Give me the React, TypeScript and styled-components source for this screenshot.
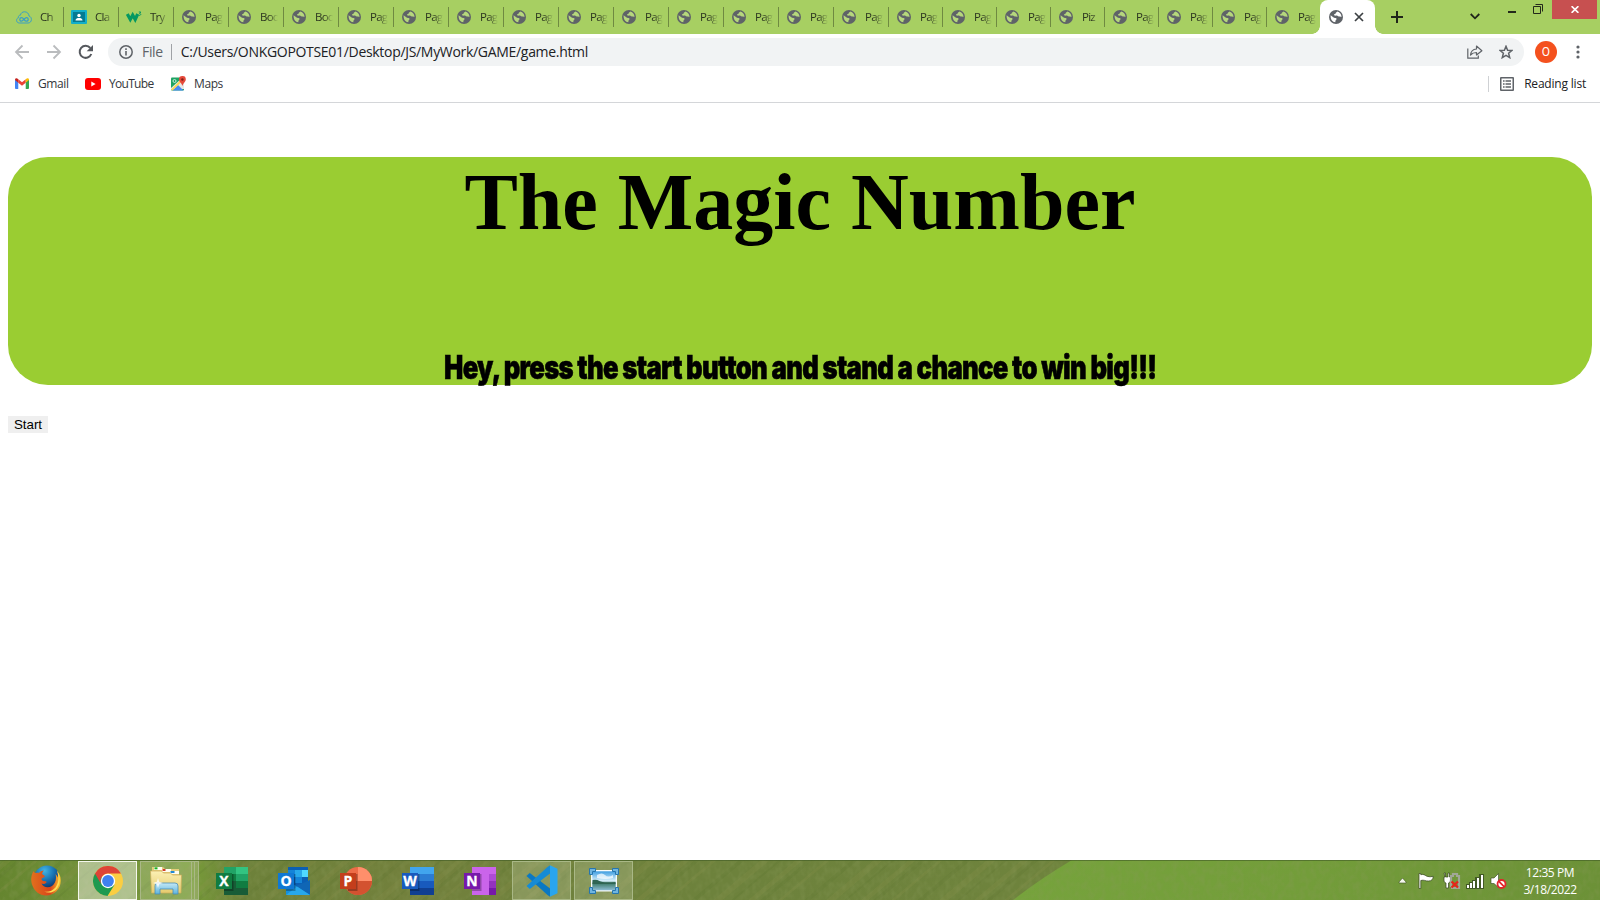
import React from "react";
import styled, { createGlobalStyle } from "styled-components";

const GlobalStyle = createGlobalStyle`
  *, *::before, *::after { box-sizing: border-box; }
  html, body { margin: 0; padding: 0; background: #fff; overflow: hidden; }
  svg { display: block; flex: none; }
`;

const UI_FONT = `"Open Sans", "Noto Sans", sans-serif`;

const Screen = styled.div`
  width: 1600px;
  height: 900px;
  display: flex;
  flex-direction: column;
  overflow: hidden;
  font-family: ${UI_FONT};
  font-size: 12px;
  color: #202124;
`;

/* ---------- tab strip ---------- */
const TabStrip = styled.div`
  height: 34px;
  flex: none;
  display: flex;
  align-items: flex-start;
  padding-left: 9px;
  background: #a7cf62;
`;

const Tab = styled.div<{ $w: number; $line: boolean }>`
  width: ${(p) => p.$w}px;
  height: 20px;
  margin-top: 7px;
  padding-left: 7px;
  flex: none;
  display: flex;
  align-items: center;
  border-right: ${(p) => (p.$line ? "1px solid #6f8a41" : "none")};
`;

const TabIcon = styled.span`
  width: 16px;
  height: 16px;
  display: flex;
  align-items: center;
  justify-content: center;
`;

const TabTitle = styled.span`
  width: 18px;
  margin-left: 8px;
  white-space: nowrap;
  font-size: 11.5px;
  line-height: 18px;
  letter-spacing: -0.75px;
  color: #2c3620;
  mask-image: linear-gradient(90deg, #000 50%, transparent 100%);
`;

const ActiveTab = styled.div`
  position: relative;
  width: 55px;
  height: 34px;
  flex: none;
  display: flex;
  align-items: center;
  padding-left: 9px;
  gap: 11px;
  background: #fff;
  border-radius: 8px 8px 0 0;
  &::before, &::after {
    content: "";
    position: absolute;
    bottom: 0;
    width: 8px;
    height: 8px;
  }
  &::before { left: -8px; background: radial-gradient(circle at 0 0, transparent 7.5px, #fff 8px); }
  &::after { right: -8px; background: radial-gradient(circle at 100% 0, transparent 7.5px, #fff 8px); }
`;

const NewTab = styled.div` margin: 11px 0 0 16px; `;
const TabSearch = styled.div` margin: 13px 0 0 auto; `;

const WindowButtons = styled.div`
  display: flex;
  align-items: flex-start;
  margin-left: 28px;
  padding-right: 3px;
`;
const Minimize = styled.i`
  width: 8px;
  height: 2px;
  margin-top: 11px;
  background: #23291b;
`;
const Restore = styled.div` margin: 4px 9px 0 17px; `;
const CloseButton = styled.div`
  width: 45px;
  height: 19px;
  display: flex;
  align-items: center;
  justify-content: center;
  background: #c75050;
`;

/* ---------- toolbar ---------- */
const Toolbar = styled.div`
  height: 36px;
  flex: none;
  display: flex;
  align-items: center;
  padding: 0 17px 0 14px;
`;
const NavButtons = styled.div`
  width: 94px;
  display: flex;
  gap: 16px;
`;
const Omnibox = styled.div`
  width: 1416px;
  height: 28px;
  display: flex;
  align-items: center;
  padding: 0 11px;
  border-radius: 14px;
  background: #f1f3f4;
  font-size: 14px;
`;
const Scheme = styled.span`
  margin: 0 8px 1px 9px;
  letter-spacing: -0.35px;
  color: #5f6368;
`;
const Divider = styled.i<{ $h: number; $c: string }>`
  width: 1px;
  height: ${(p) => p.$h}px;
  background: ${(p) => p.$c};
`;
const Address = styled.span`
  margin: 0 auto 1px 9px;
  white-space: nowrap;
  letter-spacing: -0.31px;
`;
const OmniActions = styled.div`
  display: flex;
  align-items: center;
  gap: 16px;
`;
const Avatar = styled.div`
  width: 22px;
  height: 22px;
  margin: 0 19px 0 11px;
  display: flex;
  align-items: center;
  justify-content: center;
  border-radius: 50%;
  background: #f4511e;
  color: #fff;
  font: 12px Roboto, sans-serif;
`;

/* ---------- bookmarks ---------- */
const BookmarkBar = styled.div`
  height: 33px;
  flex: none;
  display: flex;
  align-items: center;
  padding: 0 14px 5px 15px;
  border-bottom: 1px solid #d4d6d9;
`;
const Bookmark = styled.div<{ $w: number; $gap: number; $ls: number }>`
  width: ${(p) => p.$w}px;
  display: flex;
  align-items: center;
  gap: ${(p) => p.$gap}px;
  white-space: nowrap;
  letter-spacing: ${(p) => p.$ls}px;
  color: #34373b;
`;
const ReadingList = styled.div`
  margin-left: auto;
  display: flex;
  align-items: center;
  gap: 10px;
  white-space: nowrap;
  letter-spacing: -0.2px;
  & > :nth-child(2) { margin-left: 1px; }
`;

/* ---------- page ---------- */
const Page = styled.main`
  flex: 1;
  padding: 54px 8px 0;
  background: #fff;
`;
const Banner = styled.section`
  height: 228px;
  display: flex;
  flex-direction: column;
  align-items: center;
  justify-content: space-between;
  border-radius: 40px;
  background: #9acd32;
  color: #000;
`;
const Title = styled.h1`
  margin: 0;
  font: bold 80px/91px "Liberation Serif", serif;
  white-space: nowrap;
`;
const Tagline = styled.h2`
  margin: 0;
  font: 900 33px/36px Inter, sans-serif;
  letter-spacing: -0.9px;
  white-space: nowrap;
  transform: scaleX(0.779);
  -webkit-text-stroke: 0.6px #000;
`;
const StartButton = styled.button`
  width: 40px;
  height: 17px;
  margin-top: 31px;
  padding: 0;
  border: 0;
  background: #efefef;
  color: #000;
  font: 13.33px/17px "Liberation Sans", sans-serif;
  display: block;
`;

/* ---------- taskbar ---------- */
const Taskbar = styled.footer`
  position: relative;
  height: 40px;
  flex: none;
  display: flex;
  padding-left: 16px;
  background: #6f823c;
`;
const Wallpaper = styled.svg`
  position: absolute;
  inset: 0;
`;
const Slot = styled.div<{ $state?: "active" | "open" }>`
  position: relative;
  width: 59px;
  height: 39px;
  margin: 1px 3px 0 0;
  display: flex;
  align-items: center;
  justify-content: center;
  border: ${(p) => (p.$state === "active" ? "1px solid #f4f7ec" : p.$state ? "1px solid #a9b886" : "none")};
  background: ${(p) => (p.$state === "active" ? "rgba(255,255,255,.42)" : p.$state ? "rgba(235,240,215,.2)" : "none")};
`;
const Stack = styled(Slot)`
  padding-right: 8px;
  &::before, &::after {
    content: "";
    position: absolute;
    top: -1px;
    bottom: -1px;
    width: 4px;
    border: 1px solid #a9b886;
    border-width: 1px 1px 1px 0;
  }
  &::before { right: 3px; border-left-width: 1px; }
  &::after { right: -1px; }
`;
const Tray = styled.div`
  position: relative;
  margin-left: auto;
  display: flex;
  align-items: center;
  padding-top: 2px;
`;
const Clock = styled.div`
  width: 100px;
  margin-left: -8px;
  display: flex;
  flex-direction: column;
  align-items: center;
  color: #fff;
  font-size: 12px;
  line-height: 17px;
  letter-spacing: -0.4px;
  padding-bottom: 1px;
`;

/* ---------- icons ---------- */
const Globe = ({ land = "#b5d77c" }: { land?: string }) => (
  <svg width="14" height="14" viewBox="0 0 14 14">
    <circle cx="7" cy="7" r="7" fill="#5f6368" />
    <path d="M1.600 5.200 4.600 7.400c.8.6 1.800.2 2.600.8.8.7.2 1.600-.4 2-.5.4-.3 1.200-.5 2.100C3.500 11.900 1.300 9.400 1.600 5.200Z M8.300 1.600c-.4.9-1.500.8-1.600 1.700-.1.900-1.500.6-1.700 1.500-.1.800 1.200.9 2.200.8 1.200-.1 1.700.7 2.600 1 .9.300 1.500.1 2.700.4C12.500 4.500 10.900 2.300 8.300 1.600Z" fill={land} />
  </svg>
);

const CloudIcon = () => (
  <svg width="16" height="13" viewBox="0 0 16 13" fill="none" stroke="#3a9fc5" strokeWidth="1">
    <path d="M3.500 12C1.500 12 .6 10.800.6 9.300.6 8 1.300 7 2.500 6.700 2 4.800 3.500 4 4.400 4.200 4.800 2 6.500.8 8.500.8c2.500 0 4.400 1.700 4.500 4.200 1.500.4 2.400 1.700 2.400 3.500 0 2.100-1.400 3.500-3.400 3.500Z" />
    <path d="M8 8.300C7 7 6.400 6.600 5.600 6.600a1.800 1.800 0 0 0 0 3.600C6.700 10.200 9 6.600 10.400 6.600a1.800 1.800 0 0 1 0 3.600C9.600 10.200 8.800 9.500 8 8.300Z" strokeWidth="1.300" />
  </svg>
);

const ClassroomIcon = () => (
  <svg width="16" height="14" viewBox="0 0 16 14">
    <rect width="16" height="14" rx="1" fill="#12aeca" />
    <rect x="2" y="2" width="12" height="10" fill="#057a91" />
    <circle cx="8" cy="5.500" r="1.700" fill="#fff" />
    <path d="M4.500 10.500C4.500 8.600 6.400 8 8 8s3.500.6 3.500 2.500Z" fill="#fff" />
  </svg>
);

const W3Icon = () => (
  <svg width="16" height="12" viewBox="0 0 16 12" fill="none" stroke="#059862">
    <path d="M1.300 3 4.300 8.500 6.700 4 9.200 8.500 11.700 3" strokeWidth="3.200" />
    <path d="M12.800 1h2l-1.200 1.600c1.700 0 1.500 2.200-.9 1.700" strokeWidth="1" />
  </svg>
);

const Arrow = ({ flip }: { flip?: boolean }) => (
  <svg width="16" height="16" viewBox="0 0 16 16" fill="none" stroke="#babcbe" strokeWidth="1.800" transform={flip ? "scale(-1 1)" : undefined}>
    <path d="M15 8H2.300M8.500 1.500 2 8l6.500 6.500" />
  </svg>
);

const Reload = () => (
  <svg width="16" height="16" viewBox="0 0 16 16">
    <path d="M13.300 10A6 6 0 1 1 12.300 4" fill="none" stroke="#55585d" strokeWidth="2" />
    <path d="M15 1v6.300H8.700Z" fill="#55585d" />
  </svg>
);

const Info = () => (
  <svg width="14" height="14" viewBox="0 0 14 14">
    <circle cx="7" cy="7" r="6.200" fill="none" stroke="#5f6368" strokeWidth="1.500" />
    <path d="M6.200 6h1.600v4.500H6.200ZM6.200 3.300h1.600v1.600H6.200Z" fill="#5f6368" />
  </svg>
);

const Share = () => (
  <svg width="16" height="14" viewBox="0 0 16 14" fill="none" stroke="#5f6368" strokeWidth="1.200">
    <path d="M.8 3.500v9.700h10.500V10.500" />
    <path d="M3.500 10C3.800 6.300 6 4.300 9.500 4V1l5.400 4.700L9.500 10V7.500C7 7.500 5 8.300 3.500 10Z" strokeLinejoin="round" />
  </svg>
);

const Star = () => (
  <svg width="14" height="14" viewBox="0 0 14 14">
    <path d="m7 1.300 1.600 3.900 4.300.3-3.300 2.800 1.100 4.300L7 10.300l-3.700 2.300 1.100-4.300L1.100 5.500l4.300-.3Z" fill="none" stroke="#5f6368" strokeWidth="1.500" />
  </svg>
);

const Dots = () => (
  <svg width="4" height="14" viewBox="0 0 4 14" fill="#5f6368">
    <circle cx="2" cy="2" r="1.600" /><circle cx="2" cy="7" r="1.600" /><circle cx="2" cy="12" r="1.600" />
  </svg>
);

const Gmail = () => (
  <svg width="14" height="11" viewBox="0 0 15 11" preserveAspectRatio="none">
    <path d="M0 1.500V10a1 1 0 0 0 1 1h2.500V4Z" fill="#4285f4" />
    <path d="M15 1.500V10a1 1 0 0 1-1 1h-2.500V4Z" fill="#34a853" />
    <path d="M3.500 1.200 7.500 4.300l4-3.100v3.500l-4 3.100-4-3.100Z" fill="#ea4335" />
    <path d="M0 2C0 .2 1.700-.4 3.500 1.200v3.500L0 2.100Z" fill="#c5221f" />
    <path d="M15 2c0-1.800-1.700-2.400-3.500-.8v3.500L15 2.100Z" fill="#fbbc04" />
  </svg>
);

const YouTube = () => (
  <svg width="16" height="12" viewBox="0 0 16 12">
    <rect width="16" height="12" rx="3" fill="#f00" />
    <path d="M6.300 3.500v5L10.600 6Z" fill="#fff" />
  </svg>
);

const MapsIcon = () => (
  <svg width="15" height="15" viewBox="0 0 15 15">
    <rect y="1.500" width="13" height="13" rx="1" fill="#1fa463" />
    <path d="M0 13.500V12L11 2l2 2v9Z" fill="#e8e8e6" />
    <path d="M1.500 14.500 7 9l5.500 5.500Z" fill="#4a8af4" />
    <path d="M0 13.800 9 4.500l1.500 1.500L1.500 14.500Z" fill="#fdd652" />
    <circle cx="3.500" cy="5" r="1.500" fill="none" stroke="#d9f2e3" strokeWidth=".9" />
    <path d="M11.300 0a3.400 3.400 0 0 1 3.500 3.500c0 2.500-2.600 3.300-3.300 6.500-.8-3.200-3.500-4-3.500-6.500A3.400 3.400 0 0 1 11.300 0Z" fill="#e5493a" />
    <circle cx="11.400" cy="3.500" r="1.200" fill="#802018" />
  </svg>
);

const ListIcon = () => (
  <svg width="14" height="14" viewBox="0 0 14 14" fill="#5f6368">
    <path fillRule="evenodd" d="M1 0h12a1 1 0 0 1 1 1v12a1 1 0 0 1-1 1H1a1 1 0 0 1-1-1V1a1 1 0 0 1 1-1Zm.500 1.500v11h11v-11Z" />
    <path d="M3 3.300h1.600v1.500H3ZM5.500 3.300H11v1.500H5.500ZM3 6.300h1.600v1.500H3ZM5.500 6.300H11v1.500H5.500ZM3 9.300h1.600v1.500H3ZM5.500 9.300H11v1.500H5.500Z" />
  </svg>
);

const Firefox = () => (
  <svg width="30" height="31" viewBox="0 0 30 31">
    <defs>
      <radialGradient id="ffBlue" cx=".4" cy=".2" r=".8"><stop offset="0" stopColor="#42b5e6" /><stop offset=".5" stopColor="#166dae" /><stop offset="1" stopColor="#0b1f52" /></radialGradient>
      <linearGradient id="ffFire" x1="0" x2="1"><stop offset="0" stopColor="#e2701d" /><stop offset=".65" stopColor="#d9451b" /><stop offset="1" stopColor="#fbc72f" /></linearGradient>
    </defs>
    <circle cx="16" cy="13.500" r="13" fill="url(#ffBlue)" />
    <path d="M2.500 6C.2 10-.5 15 1 19.500 3 26 8.500 30.500 15 30.500c8.500 0 14.500-6.500 14.700-14.500.1-4.500-1.200-7.500-3.700-10.500 1 3 1 5 .8 7-.6-1.500-1.300-2.500-2.300-3.500 1.500 5-.5 10-3.500 12-4 2.300-9 1.300-10.500-2.500 1.700.8 3.200.4 4.500-.6 1-.8.500-1.600-.5-1.700-2.400-.2-3.800-.5-4-2.200 0-1 2.700-1.500 3.300-2.500.3-.7-1.500-1.500-2.700-2.500.1-1.500.7-2.600 1.900-3.500-2.300.1-4 1-5 2.500-1-.3-2-.2-3 0C3.700 8 2.800 7 2.500 6Z" fill="url(#ffFire)" />
    <path d="M26 6c2.600 6 1.700 12-1.500 16.500C21.500 26 17 27.500 13 26.500c4.500 2.300 10 1 13.200-3.300C29.700 18 29.500 10.500 26 6Z" fill="#fde054" />
  </svg>
);

const Chrome = () => (
  <svg width="30" height="30" viewBox="0 0 30 30">
    <circle cx="15" cy="15" r="15" fill="#fbce42" />
    <path d="M15 15 2 7.500A15 15 0 0 0 14.500 30L21.500 18.700Z" fill="#1e9a50" />
    <path d="M2 7.500A15 15 0 0 1 28 7.500H15A7.500 7.500 0 0 0 8.500 18.700Z" fill="#dd4437" />
    <circle cx="15" cy="15" r="7.200" fill="#fff" />
    <circle cx="15" cy="15" r="5.900" fill="#3f81f0" />
  </svg>
);

const Explorer = () => (
  <svg width="32" height="30" viewBox="0 0 32 30">
    <defs>
      <linearGradient id="folder" x2="0" y2="1"><stop offset="0" stopColor="#fbf0b4" /><stop offset="1" stopColor="#e6cb6e" /></linearGradient>
      <linearGradient id="stand" x2="0" y2="1"><stop offset="0" stopColor="#c4e8f6" /><stop offset="1" stopColor="#5eb4dd" /></linearGradient>
    </defs>
    <path d="M2 1h11l2 2h14v8H2Z" fill="#e4cd7b" />
    <path d="M4 1h8v3H4Z M12 3h9v3h-9Z M20 5h9v3h-9Z" fill="#fffdf0" />
    <path d="M4.500 1.300h3v2h-3Z" fill="#19b322" /><path d="M12.500 3h3v2h-3Z" fill="#d03c26" /><path d="M20.500 5h4v2h-4Z" fill="#2089d4" />
    <path d="M.5 5h11l2 2h7l2 2h9L31 27H1.500Z" fill="url(#folder)" stroke="#cdae59" strokeWidth=".7" />
    <path d="M7 17h18q3 0 3 3v8h-5v-5H10v5H5v-8q0-3 2-3Z" fill="url(#stand)" stroke="#498eb5" strokeWidth=".8" />
    <path d="m8 12 1.200 3.800L13 17l-3.800 1.200L8 22l-1.200-3.800L3 17l3.800-1.200Z" fill="#fff" opacity=".8" />
  </svg>
);

type OfficeProps = { letter: string; color: string; children: React.ReactNode };
const OfficeIcon = ({ letter, color, children }: OfficeProps) => (
  <svg width="32" height="28" viewBox="0 0 32 28">
    {children}
    <path d="M8 7h9.500v17H8Z" fill="#000" opacity=".28" />
    <rect y="6" width="16" height="16" fill={color} />
    <text x="8" y="19" textAnchor="middle" fill="#fff" stroke="#fff" strokeWidth=".3" fontFamily="Open Sans, sans-serif" fontWeight="700" fontSize="14">{letter}</text>
  </svg>
);

const VSCode = () => (
  <svg width="32" height="32" viewBox="0 0 32 32">
    <path d="M.5 11 3.800 8 24 23.500v8.200L21.500 30Z" fill="#0a78c3" />
    <path d="M.5 21 3.800 24 24 8.500V.3L21.500 2Z" fill="#168bd5" />
    <path d="M24 .3 31.500 3.800v24.400L24 31.700Z" fill="#29a5ee" />
  </svg>
);

const Viewer = () => (
  <svg width="30" height="26" viewBox="0 0 30 26">
    <defs><linearGradient id="sky" x2="0" y2="1"><stop offset="0" stopColor="#3d9de1" /><stop offset=".5" stopColor="#d7effa" /><stop offset=".65" stopColor="#417e6e" /><stop offset="1" stopColor="#8fbed5" /></linearGradient></defs>
    <rect x="2" y="2" width="26" height="21.500" fill="#f8fbfa" />
    <rect x="3.300" y="3.300" width="23.400" height="19" fill="url(#sky)" />
    <path d="M3.500 12q4-1 7 1t16 1v2h-23Z" fill="#2f6552" />
    <path d="M8 7q5-3 8 0t8 0v3q-7 2-16 0Z" fill="#fff" opacity=".7" />
    <g fill="#70b5df" stroke="#2575ae" strokeWidth="1">
      <path d="M.5.500h6v3h-3v3h-3ZM23.500.500h6v6h-3v-3h-3ZM.5 19.500h3v3h3v3h-6ZM26.500 19.500h3v6h-6v-3h3Z" />
    </g>
  </svg>
);

const TrayIcons = () => (
  <svg width="110" height="18" viewBox="0 0 110 18">
    <path d="m1 10 3.500-4L8 10v1H1Z" fill="#f4f7ed" stroke="#3e5420" strokeWidth=".6" />
    <path d="M21 1.500h1.800v1.200c3-1 4.200.8 6.200 1.600q3 1 6.200 0c0 3-1.500 4.700-4.700 4.700-3 .2-4.500-1.500-7.700-.5v8H21Z" fill="#fff" stroke="#33441d" strokeWidth=".7" />
    <path d="M46 1h1.500v4H50V1h1.500v4h1v3c0 2-1 2.500-2 3v5h-2.500v-5c-1.500-.5-2-1-2-3V5h1Z" fill="#fff" stroke="#33441d" strokeWidth=".7" />
    <path d="M53 15V4h2V2h4v2h2v12h-8" fill="none" stroke="#a1a797" strokeWidth="2.200" />
    <path d="m53.500 9.500 6.500 6m0-6-6.500 6" stroke="#e8231b" strokeWidth="2.300" />
    <path d="M68 12h3v-2h3V8h3V5h4V2h5v15H68Z" fill="#33441d" opacity=".75" />
    <path d="M69 13h2v3h-2ZM72 11h2v5h-2ZM75 9h2v7h-2ZM79 6h2v10h-2ZM83 3h2v13h-2Z" fill="#fff" />
    <path d="M93 6h3l4.500-4.500v14L96 11.500h-3Z" fill="#fff" stroke="#33441d" strokeWidth=".6" />
    <circle cx="103.500" cy="12" r="4" fill="#fff" stroke="#e3242b" strokeWidth="1.800" />
    <path d="m100.700 9.200 5.600 5.600" stroke="#e3242b" strokeWidth="1.800" />
  </svg>
);

const TaskbarWallpaper = () => (
  <Wallpaper width="1600" height="40" viewBox="0 0 1600 40">
    <defs>
      <linearGradient id="leaf"><stop offset="0" stopColor="#65852f" /><stop offset=".07" stopColor="#76953c" /><stop offset=".12" stopColor="#779b39" /><stop offset=".15" stopColor="#6d813a" /><stop offset=".25" stopColor="#72803c" /><stop offset=".45" stopColor="#6d823c" /><stop offset="1" stopColor="#70853d" /></linearGradient>
      <linearGradient id="bright"><stop offset="0" stopColor="#76a33c" /><stop offset=".5" stopColor="#739d3a" /><stop offset="1" stopColor="#6c9137" /></linearGradient>
      <pattern id="veins" width="113" height="40" patternUnits="userSpaceOnUse" patternTransform="skewX(-50)">
        <path d="M5 0h7v40H5ZM35 0h4v40h-4ZM83 0h9v40h-9Z" fill="#8b9149" opacity=".2" />
        <path d="M17 0h5v40h-5ZM61 0h6v40h-6ZM101 0h3v40h-3Z" fill="#4e6a2b" opacity=".15" />
      </pattern>
      <filter id="grain" x="0" y="0" width="1" height="1">
        <feTurbulence type="fractalNoise" baseFrequency=".18 .13" numOctaves="2" seed="4" />
        <feColorMatrix values="0 0 0 0 .25  0 0 0 0 .32  0 0 0 0 .1  1.300 0 0 0 -.5" />
      </filter>
    </defs>
    <rect width="1600" height="40" fill="url(#leaf)" />
    <rect width="1600" height="40" fill="url(#veins)" />
    <path d="M1072 0H1600V40H1013Q1040 19 1072 0Z" fill="url(#bright)" />
    <rect width="1600" height="40" filter="url(#grain)" opacity=".5" />
    <rect width="1600" height="1" fill="#3f5a25" opacity=".6" />
  </Wallpaper>
);

/* ---------- data ---------- */
const tabTitles = [
  "Ch", "Cla", "Try", "Pag", "Boo", "Boo", "Pag", "Pag", "Pag", "Pag", "Pag", "Pag",
  "Pag", "Pag", "Pag", "Pag", "Pag", "Pag", "Pag", "Piz", "Pag", "Pag", "Pag", "Pag",
];
const siteIcons = [<CloudIcon />, <ClassroomIcon />, <W3Icon />];

export default function App() {
  return (
    <Screen>
      <GlobalStyle />
      <TabStrip>
        {tabTitles.map((title, i) => (
          <Tab key={i} $w={i < 16 ? 55 : i < 23 ? 54 : 53} $line={i < 23}>
            <TabIcon>{siteIcons[i] ?? <Globe />}</TabIcon>
            <TabTitle>{title}</TabTitle>
          </Tab>
        ))}
        <ActiveTab>
          <Globe land="#fff" />
          <svg width="10" height="10" viewBox="0 0 10 10" stroke="#3c4043" strokeWidth="1.700"><path d="m1 1 8 8M9 1 1 9" /></svg>
        </ActiveTab>
        <NewTab>
          <svg width="12" height="12" viewBox="0 0 12 12" fill="#20261a"><path d="M5 0h2v5h5v2H7v5H5V7H0V5h5Z" /></svg>
        </NewTab>
        <TabSearch>
          <svg width="10" height="7" viewBox="0 0 10 7" fill="none" stroke="#20261a" strokeWidth="1.800"><path d="m.7 1 4.300 4.300L9.300 1" /></svg>
        </TabSearch>
        <WindowButtons>
          <Minimize />
          <Restore>
            <svg width="10" height="10" viewBox="0 0 10 10" fill="none" stroke="#23291b"><path d="M.5 2.500h7v7h-7Z" /><path d="M2.500.5h7v7" /></svg>
          </Restore>
          <CloseButton>
            <svg width="8" height="7" viewBox="0 0 8 7" stroke="#fff" strokeWidth="1.700"><path d="m.6.200 6.800 6.600M7.400.2.600 6.800" /></svg>
          </CloseButton>
        </WindowButtons>
      </TabStrip>

      <Toolbar>
        <NavButtons><Arrow /><Arrow flip /><Reload /></NavButtons>
        <Omnibox>
          <Info />
          <Scheme>File</Scheme>
          <Divider $h={16} $c="#9fa2a6" />
          <Address>C:/Users/ONKGOPOTSE01/Desktop/JS/MyWork/GAME/game.html</Address>
          <OmniActions><Share /><Star /></OmniActions>
        </Omnibox>
        <Avatar>O</Avatar>
        <Dots />
      </Toolbar>

      <BookmarkBar>
        <Bookmark $w={70} $gap={9} $ls={-0.4}><Gmail /><span>Gmail</span></Bookmark>
        <Bookmark $w={86} $gap={8} $ls={-0.7}><YouTube /><span>YouTube</span></Bookmark>
        <Bookmark $w={60} $gap={8} $ls={-0.4}><MapsIcon /><span>Maps</span></Bookmark>
        <ReadingList><Divider $h={16} $c="#cfd1d4" /><ListIcon /><span>Reading list</span></ReadingList>
      </BookmarkBar>

      <Page>
        <Banner>
          <Title>The Magic Number</Title>
          <Tagline>Hey, press the start button and stand a chance to win big!!!</Tagline>
        </Banner>
        <StartButton>Start</StartButton>
      </Page>

      <Taskbar>
        <TaskbarWallpaper />
        <Slot><Firefox /></Slot>
        <Slot $state="active"><Chrome /></Slot>
        <Stack $state="open"><Explorer /></Stack>
        <Slot>
          <OfficeIcon letter="X" color="#107c41">
            <path d="M8 0h24v28H8Z" fill="#185c37" /><path d="M8 0h12v7H8Z" fill="#21a366" /><path d="M20 0h12v7H20Z" fill="#33c481" />
            <path d="M8 7h12v7H8Z" fill="#107c41" /><path d="M20 7h12v7H20Z" fill="#21a366" /><path d="M20 14h12v7H20Z" fill="#107c41" />
          </OfficeIcon>
        </Slot>
        <Slot>
          <OfficeIcon letter="O" color="#0f78d4">
            <path d="M10 0h20v20H10Z" fill="#0a5fb4" /><path d="M10 3h7v7h-7ZM17 10h7v6h-7Z" fill="#1484d8" /><path d="M17 3h7v7h-7Z" fill="#28a8ea" /><path d="M24 3h6v7h-6Z" fill="#50d9ff" />
            <path d="M8 13 20 20 32 13V28H8Z" fill="#1490df" /><path d="M32 13v15L18 19Z" fill="#1066b5" /><path d="M8 28h24L19 19.500Z" fill="#28a8ea" />
          </OfficeIcon>
        </Slot>
        <Slot>
          <OfficeIcon letter="P" color="#c43e1c">
            <circle cx="18" cy="14" r="14" fill="#ed6c47" /><path d="M18 0a14 14 0 0 1 14 14H18Z" fill="#ff8f6b" /><path d="M4 14h28a14 14 0 0 1-28 0Z" fill="#d35230" />
          </OfficeIcon>
        </Slot>
        <Slot>
          <OfficeIcon letter="W" color="#185abd">
            <path d="M8 0h24v7H8Z" fill="#41a5ee" /><path d="M8 7h24v7H8Z" fill="#2b7cd3" /><path d="M8 14h24v7H8Z" fill="#185abd" /><path d="M8 21h24v7H8Z" fill="#103f91" />
          </OfficeIcon>
        </Slot>
        <Slot>
          <OfficeIcon letter="N" color="#7719aa">
            <path d="M8 0h24v28H8Z" fill="#ca64ea" /><path d="M25 7h7v7h-7Z" fill="#ae4bd5" /><path d="M25 14h7v7h-7Z" fill="#9332bf" /><path d="M25 21h7v7h-7Z" fill="#7719aa" />
          </OfficeIcon>
        </Slot>
        <Slot $state="open"><VSCode /></Slot>
        <Slot $state="open"><Viewer /></Slot>
        <Tray>
          <TrayIcons />
          <Clock><span>12:35 PM</span><span>3/18/2022</span></Clock>
        </Tray>
      </Taskbar>
    </Screen>
  );
}
